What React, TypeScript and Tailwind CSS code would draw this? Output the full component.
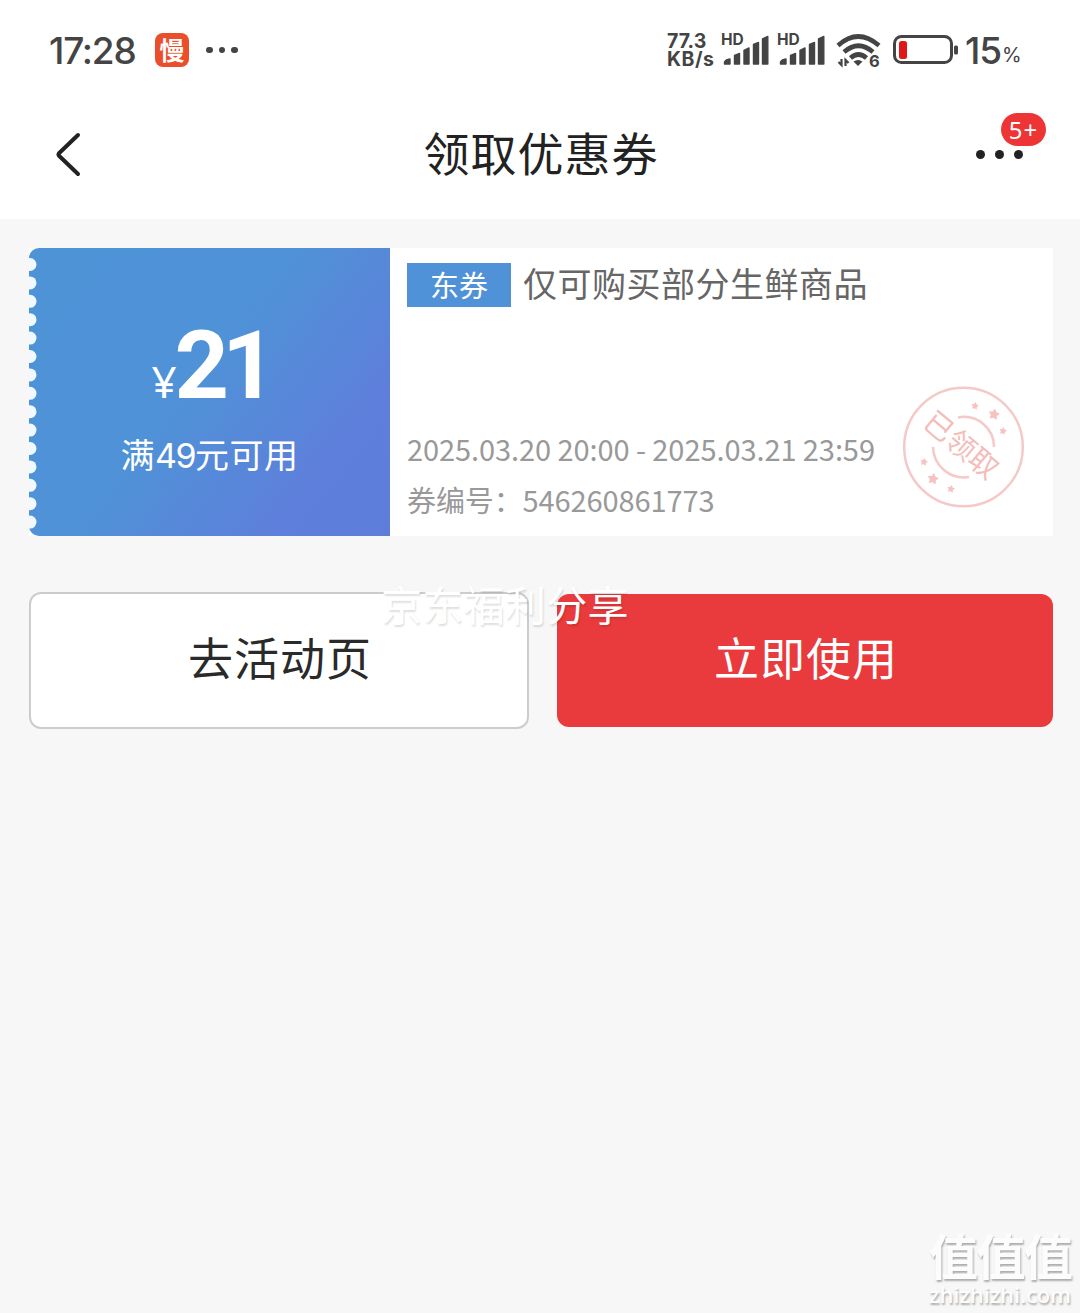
import React from "react";

function SignalBars() {
  return (
    <div className="relative h-[36px] w-[47px]">
      <span className="absolute -left-px top-0 font-[Inter,sans-serif] text-[15.5px] leading-[16px] font-bold">HD</span>
      <svg className="absolute inset-0" width="47" height="36" viewBox="0 0 47 36" fill="#444" stroke="#444" strokeWidth="1.400" strokeLinejoin="round">
        <path d="M2.500 30Q4 27.500 8 27V32H2.500z" />
        <path d="M12.500 23.500L17.500 21.500V32H12.500z" />
        <path d="M22 18.500L27 16V32H22z" />
        <path d="M31.500 12.500L36.500 10.500V32H31.500z" />
        <path d="M40.500 7L45.800 4.500V32H40.500z" />
      </svg>
    </div>
  );
}

function Wifi() {
  return (
    <div className="relative h-[36px] w-[46px]">
      <svg width="46" height="36" viewBox="0 0 46 36" fill="none" stroke="#444" strokeWidth="4.600">
        <path d="M2 13.500Q22 -4.500 43 13.500" />
        <path d="M8 20Q22.500 7.500 37 20" />
        <path d="M14.500 26Q22.500 19 30.500 26" />
        <path d="M17.500 29.500Q22 26.500 26.500 29.500L22 34z" fill="#444" stroke="none" />
        <path d="M5.500 27v6L2.500 30M9.500 34V28L12.500 31" strokeWidth="2.200" />
      </svg>
      <span className="absolute top-[19px] left-[33px] font-[Inter,sans-serif] text-[16.5px] leading-[20px] font-bold">6</span>
    </div>
  );
}

function StatusBar() {
  return (
    <div className="flex h-[100px] items-center justify-between pr-[60px] pl-[49px] font-[Inter,sans-serif] text-[#444]">
      <div className="flex items-center">
        <span className="w-[106px] text-[37px] leading-none font-medium tracking-[-1.2px]">17:28</span>
        <span className="flex size-[34px] items-center justify-center rounded-[8px] bg-[#ea4e2a] pb-[1px] font-['Noto_Sans_CJK_SC',sans-serif] text-[25px] leading-none font-bold text-white">慢</span>
        <span className="ml-[17px] flex gap-[6px]">
          <i className="size-[6.500px] rounded-full bg-[#444]" />
          <i className="size-[6.500px] rounded-full bg-[#444]" />
          <i className="size-[6.500px] rounded-full bg-[#444]" />
        </span>
      </div>
      <div className="flex items-center">
        <div className="w-[55px] text-[19.5px] leading-[18px] font-bold">
          <div>77.3</div>
          <div className="tracking-[0.5px]">KB/s</div>
        </div>
        <div className="mr-[9px]"><SignalBars /></div>
        <div className="mr-[11px]"><SignalBars /></div>
        <Wifi />
        <svg className="ml-[11px]" width="66" height="30" viewBox="0 0 66 30">
          <rect x="1.500" y="1.500" width="57" height="26" rx="7" fill="none" stroke="#444" strokeWidth="3" />
          <rect x="6" y="6" width="8" height="18" rx="2.500" fill="#df1717" />
          <rect x="61" y="10.500" width="4" height="9" rx="1.500" fill="#444" />
        </svg>
        <span className="ml-[6px] w-[37px] text-[37px] leading-none font-medium tracking-[-1px]">15</span>
        <span className="mt-[9px] w-[18px] text-[20px] leading-none tracking-[-1px]">%</span>
      </div>
    </div>
  );
}

function Header() {
  return (
    <header className="relative flex h-[119px] items-center justify-center bg-white pb-[17px] pl-[2px]">
      <svg className="absolute top-[32px] left-[54px]" width="30" height="46" viewBox="0 0 30 46" fill="none" stroke="#222" strokeWidth="4" strokeLinecap="round" strokeLinejoin="round">
        <path d="M24 3L5 21.300Q4 22.500 5 23.700L24 42" />
      </svg>
      <h1 className="text-[46px] leading-none tracking-[1px] text-[#222]">领取优惠券</h1>
      <div className="absolute top-[50px] left-[976px] flex gap-[10.500px]">
        <i className="size-[8.500px] rounded-full bg-[#222]" />
        <i className="size-[8.500px] rounded-full bg-[#222]" />
        <i className="size-[8.500px] rounded-full bg-[#222]" />
      </div>
      <span className="absolute top-[13px] left-[1001px] flex h-[33px] w-[45px] items-center justify-center rounded-full bg-[#ee3535] font-['Noto_Sans',sans-serif] text-[24px] leading-none tracking-[1px] text-white">5+</span>
    </header>
  );
}

const notches = Array.from({ length: 15 }, (_, i) => 16.5 + i * 18.4);

function star(cx: number, cy: number, r: number) {
  return Array.from({ length: 10 }, (_, i) => {
    const a = -Math.PI / 2 + 0.2 + (i * Math.PI) / 5;
    const d = i % 2 ? r * 0.55 : r;
    return `${cx + d * Math.cos(a)},${cy + d * Math.sin(a)}`;
  }).join(" ");
}

function Stamp() {
  return (
    <div className="absolute top-[138px] left-[874px] size-[122px]">
      <svg width="122" height="122" viewBox="0 0 122 122" fill="none" stroke="#f5c9c7" strokeWidth="2.500">
        <circle cx="60.500" cy="61" r="59.300" />
        <path d="M55 31.500A30 30 0 0 1 91 61" />
        <path d="M30 61A31 31 0 0 0 66 91" />
        <g fill="#f5c4c2" stroke="none">
          <polygon points={star(72, 20, 4)} />
          <polygon points={star(91, 28.5, 6)} />
          <polygon points={star(100, 45, 4)} />
          <polygon points={star(21, 76, 4)} />
          <polygon points={star(30, 93, 6)} />
          <polygon points={star(48, 103, 4)} />
        </g>
      </svg>
      <span className="absolute -top-[4px] -left-[1px] flex size-[122px] rotate-[40deg] items-center justify-center text-[29px] leading-none whitespace-nowrap text-[#f3bdba]">已领取</span>
    </div>
  );
}

function Coupon() {
  return (
    <section className="relative flex h-[288px] w-[1024px] bg-white">
      <div className="relative flex w-[361px] flex-col items-center rounded-l-[10px] bg-[linear-gradient(128deg,#4f93d7_0%,#4f92d7_45%,#5e7fdb_80%,#5e7ddb_100%)] text-white">
        <svg className="absolute top-0 left-0" width="10" height="288" viewBox="0 0 10 288">
          {notches.map((y) => (
            <ellipse key={y} cx="1" cy={y} rx="6.500" ry="6.500" fill="#f2f8ff" />
          ))}
        </svg>
        <div className="mt-[68px] flex h-[100px] items-baseline">
          <span className="-mr-[1px] w-[24px] text-center font-['Noto_Sans',sans-serif] text-[44px] leading-[100px]">¥</span>
          <span className="w-[93px] font-[Roboto,sans-serif] text-[95px] leading-[100px] font-bold tracking-[-7px]">21</span>
        </div>
        <div className="mt-[20px] text-[34px] leading-[36px] tracking-[0.5px] whitespace-nowrap">满<span className="font-[Inter,sans-serif] tracking-[-1.500px]">49</span>元可用</div>
      </div>
      <div className="flex flex-col pl-[17px]">
        <div className="mt-[15px] flex h-[44px] items-center">
          <span className="flex h-[44px] w-[104px] items-center justify-center bg-[#4f92d7] pb-[2px] text-[29px] leading-none text-white">东券</span>
          <span className="mb-[5px] ml-[12px] text-[34px] leading-none tracking-[0.5px] text-[#666]">仅可购买部分生鲜商品</span>
        </div>
        <div className="mt-[124px] text-[29px] leading-[34px] tracking-[-0.08px] whitespace-nowrap text-[#999]">2025.03.20 20:00 - 2025.03.21 23:59</div>
        <div className="mt-[17px] text-[29px] leading-[34px] tracking-[-0.1px] whitespace-nowrap text-[#999]">券编号：546260861773</div>
      </div>
      <Stamp />
    </section>
  );
}

export default function App() {
  return (
    <div className="relative h-[1313px] w-[1080px] overflow-hidden bg-[#f7f7f7] font-['Noto_Sans_CJK_SC',sans-serif]">
      <div className="bg-white">
        <StatusBar />
        <Header />
      </div>
      <main className="pt-[29px] pl-[29px]">
        <Coupon />
        <div className="mt-[56px] flex gap-[28px]">
          <button className="h-[137px] w-[500px] rounded-[12px] border-2 border-[#ccc] bg-white pb-[8px] pl-[2px] text-[45px] leading-none tracking-[1px] text-[#2a2a2a]">去活动页</button>
          <button className="mt-[2px] h-[133px] w-[496px] rounded-[12px] bg-[#e93b3d] pb-[8px] pl-[2px] text-[45px] leading-none tracking-[1px] text-white">立即使用</button>
        </div>
      </main>
      <div className="absolute top-[582px] left-[381px] text-[41px] leading-[42px] tracking-[0.3px] whitespace-nowrap text-white [text-shadow:1px_2px_2px_rgba(0,0,0,0.13)]">京东福利分享</div>
      <div className="absolute top-[1229px] left-[929px] w-[151px] text-[#fcfcfc] [text-shadow:1px_2px_2px_rgba(0,0,0,0.3)]">
        <div className="text-[49px] leading-[49px] font-bold tracking-[-1.5px] whitespace-nowrap">值值值</div>
        <div className="mt-[3px] font-['Open_Sans',sans-serif] text-[22px] leading-[26px] font-semibold tracking-[-0.1px]">zhizhizhi.com</div>
      </div>
    </div>
  );
}
